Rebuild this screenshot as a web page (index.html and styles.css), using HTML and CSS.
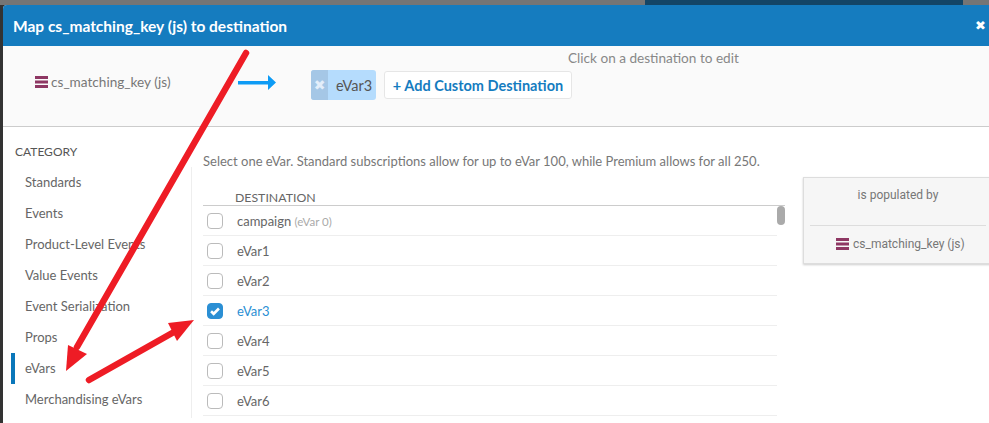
FILE: index.html
```html
<!DOCTYPE html>
<html lang="en">
<head>
<meta charset="utf-8">
<title>Map cs_matching_key (js) to destination</title>
<link rel="stylesheet" href="styles.css">
</head>
<body>
<div class="backdrop"><div class="backdrop-nav"></div></div>
<div class="modal">
  <header class="modal-head">
    <h1 class="modal-title">Map cs_matching_key (js) to destination</h1>
    <span class="close">✖</span>
  </header>
  <section class="mapping">
    <div class="source">
      <svg class="stack" viewBox="0 0 13 12"><rect width="13" height="3"/><rect y="4.500" width="13" height="3"/><rect y="9" width="13" height="3"/></svg>
      <span>cs_matching_key (js)</span>
    </div>
    <svg class="flow-arrow" viewBox="0 0 38 15"><path d="M0 6h30V0l8 7.500-8 7.500V9.500H0z"/></svg>
    <div class="tag"><span class="tag-x">✖</span><span class="tag-label">eVar3</span></div>
    <button class="add-btn">+ Add Custom Destination</button>
    <p class="hint">Click on a destination to edit</p>
  </section>
  <div class="body">
    <nav class="cats">
      <h2 class="cats-title">CATEGORY</h2>
      <a class="cat">Standards</a>
      <a class="cat">Events</a>
      <a class="cat">Product-Level Events</a>
      <a class="cat">Value Events</a>
      <a class="cat">Event Serialization</a>
      <a class="cat">Props</a>
      <a class="cat cat-active">eVars</a>
      <a class="cat">Merchandising eVars</a>
    </nav>
    <main class="dest">
      <p class="dest-note">Select one eVar. Standard subscriptions allow for up to eVar 100, while Premium allows for all 250.</p>
      <div class="dest-head">DESTINATION</div>
      <div class="dest-list">
        <div class="thumb"></div>
        <div class="row"><span class="box"></span><span>campaign <small class="sub">(eVar 0)</small></span></div>
        <div class="row"><span class="box"></span><span>eVar1</span></div>
        <div class="row"><span class="box"></span><span>eVar2</span></div>
        <div class="row row-on"><span class="box box-on"><svg viewBox="0 0 16 16"><path d="M3.500 8.300l3 2.900 6-6" fill="none" stroke="#fff" stroke-width="3"/></svg></span><span>eVar3</span></div>
        <div class="row"><span class="box"></span><span>eVar4</span></div>
        <div class="row"><span class="box"></span><span>eVar5</span></div>
        <div class="row"><span class="box"></span><span>eVar6</span></div>
      </div>
    </main>
    <aside class="pop">
      <div class="pop-top">is populated by</div>
      <div class="pop-bottom">
        <svg class="stack" viewBox="0 0 13 12"><rect width="13" height="3"/><rect y="4.500" width="13" height="3"/><rect y="9" width="13" height="3"/></svg>
        <span>cs_matching_key (js)</span>
      </div>
    </aside>
  </div>
</div>
<svg class="annot" viewBox="0 0 989 423">
  <path d="M246 53L77 347" stroke="#ee1c25" stroke-width="6.500" stroke-linecap="round" fill="none"/>
  <path d="M66 371L68 345L87 354z" fill="#ee1c25"/>
  <path d="M89 380L174 332" stroke="#ee1c25" stroke-width="6.500" stroke-linecap="round" fill="none"/>
  <path d="M194 320L168 323L177 341z" fill="#ee1c25"/>
</svg>
</body>
</html>
```
FILE: styles.css
```css
* { box-sizing: border-box; }
html, body { margin: 0; height: 423px; overflow: hidden; }
body {
  position: relative;
  background: #333;
  font-family: "Lato", "Liberation Sans", sans-serif;
  color: #666;
  padding-left: 3px;
}
.backdrop { height: 5px; background: #757575; margin-left: -3px; padding-left: 645px; }
.backdrop-nav { width: 318px; height: 5px; background: #134566; }
.modal { background: #fff; height: 418px; overflow: hidden; border-top-left-radius: 4px; }
.modal-head {
  height: 41px; background: #157cbf; color: #fff;
  display: flex; align-items: center; justify-content: space-between;
  padding: 0 3px 0 10px;
}
.modal-title { margin: 0; font-size: 15.5px; font-weight: 700; }
.close { font-size: 13px; font-family: "DejaVu Sans", sans-serif; }
.mapping {
  position: relative; height: 81px; background: #fafafa; border-bottom: 1px solid #ccc;
  display: flex; align-items: flex-start; padding: 24px 0 0 32px;
}
.source { display: flex; align-items: center; gap: 3px; font-size: 13.6px; color: #777; height: 24px; width: 203px; }
.stack { width: 13px; height: 12px; fill: #8e3763; flex: none; }
.flow-arrow { width: 38px; height: 15px; fill: #0d9bf5; margin: 5px 0 0 0; flex: none; }
.tag {
  margin-left: 35px; height: 30px; width: 65px; display: flex; align-items: center;
  background: #b5dcfd; border-radius: 3px; overflow: hidden; font-size: 14.5px; color: #555;
}
.tag-x {
  width: 17px; height: 100%; background: #a5c7e6; color: #e3eefa; font-family: "DejaVu Sans", sans-serif;
  font-size: 14px; display: flex; align-items: center; justify-content: center;
}
.tag-label { margin-left: 8px; }
.add-btn {
  margin: 1px 0 0 8px; height: 28px; width: 188px; padding: 0; background: #fff; border: 1px solid #e6e6e6; border-radius: 3px;
  color: #157cbf; font: 700 14.5px "Lato", "Liberation Sans", sans-serif;
}
.hint { position: absolute; left: 565px; top: 4px; margin: 0; font-size: 13.6px; color: #888; }
.body { display: flex; align-items: flex-start; }
.cats {
  width: 189px; height: 291px; padding-top: 18px; flex: none;
  background: linear-gradient(#eee, #eee) right 40px / 1px 100% no-repeat;
}
.cats-title { margin: 0 0 8px 12px; font-size: 12px; font-weight: 400; color: #555; line-height: 14px; }
.cat { display: block; height: 31px; line-height: 31px; padding-left: 10px; margin-left: 8px; font-size: 13px; color: #666; border-left: 4px solid transparent; }
.cat-active { border-left-color: #0a77ba; }
.dest { width: 593px; padding-left: 11px; flex: none; }
.dest-note { margin: 27px 0 0; font-size: 13px; line-height: 14px; color: #777; font-weight: 400; white-space: nowrap; }
.dest-head { margin-top: 23px; padding-left: 32px; font-size: 12.3px; line-height: 14px; color: #666; border-bottom: 1px solid #ccc; }
.dest-list { position: relative; width: 574px; }
.thumb { position: absolute; right: -8px; top: 0; width: 8px; height: 19px; background: #aaa; border-radius: 4px; }
.row { height: 30px; display: flex; align-items: center; gap: 14px; padding-left: 4px; font-size: 13px; color: #666; border-bottom: 1px solid #eee; }
.box { width: 16px; height: 16px; border: 1px solid #bbb; border-radius: 4px; background: #fff; flex: none; }
.box-on { background: #2b8fd4; border-color: #2b8fd4; }
.box-on svg { display: block; width: 14px; height: 14px; }
.row-on { color: #2b8fd4; }
.sub { font-size: 11.5px; color: #aaa; }
.pop {
  margin: 50px 0 0 18px; width: 190px; height: 87px; background: #f6f6f6; border: 1px solid #ddd;
  box-shadow: 0 1px 2px rgba(0,0,0,.2); font-family: "Roboto", sans-serif; font-size: 12px; color: #777; flex: none;
}
.pop-top { height: 48px; margin: 0 6px; padding-top: 10px; line-height: 14px; text-align: center; border-bottom: 1px solid #ddd; }
.pop-bottom { display: flex; align-items: center; gap: 4px; padding: 11px 0 0 32px; }
.annot { position: absolute; left: 0; top: 0; width: 989px; height: 423px; pointer-events: none; }
```
